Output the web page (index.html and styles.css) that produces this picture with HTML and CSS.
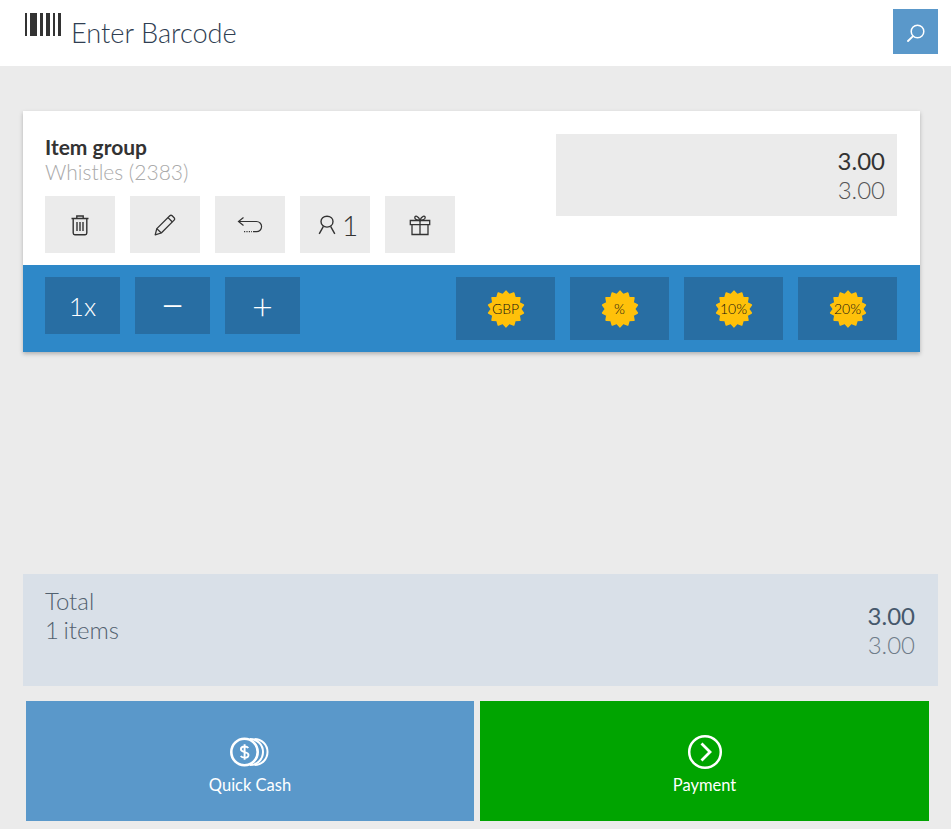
FILE: index.html
```html
<!DOCTYPE html>
<html lang="en">
<head>
<meta charset="utf-8">
<title>Enter Barcode</title>
<link rel="stylesheet" href="styles.css">
</head>
<body>
<svg class="defs" width="0" height="0" aria-hidden="true">
  <symbol id="burst" viewBox="-20 -20 40 40">
    <polygon points="0,-17.800 3.230,-14.140 7.720,-16.040 9.040,-11.340 13.920,-11.100 13.060,-6.290 17.350,-3.960 14.500,0 17.350,3.960 13.060,6.290 13.920,11.100 9.040,11.340 7.720,16.040 3.230,14.140 0,17.800 -3.230,14.140 -7.720,16.040 -9.040,11.340 -13.920,11.100 -13.060,6.290 -17.350,3.960 -14.500,0 -17.350,-3.960 -13.060,-6.290 -13.920,-11.100 -9.040,-11.340 -7.720,-16.040 -3.230,-14.140" fill="#ffc10a" stroke="#ffc10a" stroke-width="1.600" stroke-linejoin="round"/>
  </symbol>
</svg>
<div class="page">
  <header class="topbar">
    <div class="barcode-entry">
      <svg class="barcode" width="37" height="24" viewBox="0 0 37 24">
        <rect x="0" y="0" width="2" height="23" fill="#333"/>
        <rect x="5" y="0" width="7" height="23" fill="#333"/>
        <rect x="15" y="0" width="3" height="23" fill="#333"/>
        <rect x="21" y="0" width="4" height="23" fill="#333"/>
        <rect x="28" y="0" width="2" height="23" fill="#333"/>
        <rect x="33" y="0" width="3" height="23" fill="#333"/>
      </svg>
      <span class="barcode-label">Enter Barcode</span>
    </div>
    <button class="search-btn" aria-label="Search">
      <svg width="20" height="20" viewBox="0 0 20 20" fill="none" stroke="#fff" stroke-linecap="round">
        <circle cx="11.500" cy="9.500" r="6.300" stroke-width="1.500"/>
        <path d="M6.800 14.300 2 19" stroke-width="1.800"/>
      </svg>
    </button>
  </header>

  <main class="content">
    <section class="card">
      <div class="card-top">
        <div class="item-info">
          <div class="item-title">Item group</div>
          <div class="item-sub">Whistles (2383)</div>
          <div class="actions">
            <button class="action">
              <svg width="20" height="22" viewBox="0 0 20 22" fill="none" stroke="#333" stroke-width="1.400">
                <path d="M1.500 4.500h17M6.800 4.300V2h6.400v2.300M3.200 4.700v14.400c0 1 .6 1.600 1.600 1.600h10.400c1 0 1.600-.6 1.600-1.600V4.700"/>
                <path d="M7 8v9M10 8v9M13 8v9"/>
              </svg>
            </button>
            <button class="action">
              <svg width="22" height="22" viewBox="0 0 22 22" fill="none" stroke="#333" stroke-width="1.300" stroke-linejoin="round">
                <path d="M1.200 20.800 2.800 14.600 15.800 1.800c.7-.7 1.700-.7 2.400 0l1.900 1.900c.7.700.7 1.700 0 2.400L7.300 19Z"/>
                <path d="M2.800 14.600 7.300 19M14 3.600l4.400 4.400"/>
              </svg>
            </button>
            <button class="action">
              <svg width="26" height="18" viewBox="0 0 26 18" fill="none" stroke="#333" stroke-width="1.200">
                <path d="M6.500 1.500 1.500 5.500l5 4M1.800 5.500H19.500a4.800 4.800 0 0 1 0 10.200H16"/>
                <path d="M7 15.700h8" stroke-dasharray="1.200 1.200"/>
              </svg>
            </button>
            <button class="action action-guest">
              <svg width="18" height="20" viewBox="0 0 18 20" fill="none" stroke="#333" stroke-width="1.400">
                <path d="M9 1.300c3.600 0 6 2.300 6 5.300 0 3.200-2.600 5.500-6 5.500s-6-2.300-6-5.500c0-3 2.400-5.300 6-5.300Z"/>
                <path d="M5.400 11.300 1.200 18.900M12.600 11.300l4.200 7.600"/>
              </svg>
              <span class="guest-count">1</span>
            </button>
            <button class="action">
              <svg width="22" height="22" viewBox="0 0 22 22" fill="none" stroke="#333" stroke-width="1.300">
                <path d="M1.300 6.500h19.400v4.200H1.300ZM3 10.700v9.800h16v-9.800M11 6.500v14"/>
                <path d="M11 6.300C9 6.300 5.800 5.600 5.800 3.500c0-2.200 3.600-2 5.200 2.800 1.600-4.800 5.200-5 5.200-2.800 0 2.100-3.200 2.800-5.200 2.800Z"/>
              </svg>
            </button>
          </div>
        </div>
        <div class="price-box">
          <div class="price-main">3.00</div>
          <div class="price-sub">3.00</div>
        </div>
      </div>
      <div class="card-bar">
        <div class="qty-group">
          <button class="qty">1x</button>
          <button class="qty qty-minus">—</button>
          <button class="qty qty-plus">+</button>
        </div>
        <div class="discount-group">
          <button class="discount"><svg class="burst" viewBox="0 0 40 40"><use href="#burst" width="40" height="40"/></svg><span class="discount-label">GBP</span></button>
          <button class="discount"><svg class="burst" viewBox="0 0 40 40"><use href="#burst" width="40" height="40"/></svg><span class="discount-label">%</span></button>
          <button class="discount"><svg class="burst" viewBox="0 0 40 40"><use href="#burst" width="40" height="40"/></svg><span class="discount-label">10%</span></button>
          <button class="discount"><svg class="burst" viewBox="0 0 40 40"><use href="#burst" width="40" height="40"/></svg><span class="discount-label">20%</span></button>
        </div>
      </div>
    </section>

    <section class="totals">
      <div class="totals-left">
        <div>Total</div>
        <div class="totals-count">1 items</div>
      </div>
      <div class="totals-right">
        <div class="totals-main">3.00</div>
        <div class="totals-sub">3.00</div>
      </div>
    </section>

    <div class="pay-row">
      <button class="pay pay-cash">
        <svg width="40" height="30" viewBox="0 0 40 30" fill="none" stroke="#fff">
          <path d="M20 2a13 13 0 0 1 0 26" stroke-width="2"/>
          <path d="M24.500 2a13 13 0 0 1 0 26" stroke-width="2"/>
          <circle cx="14.500" cy="15" r="13.200" fill="#5a98ca" stroke-width="2.600"/>
          <path d="M18.300 11c-.7-1-2-1.500-3.700-1.500-2.200 0-3.700 1.100-3.700 2.700 0 3.800 7.600 1.900 7.600 5.700 0 1.700-1.600 2.700-3.900 2.700-1.700 0-3.100-.6-3.900-1.600M14.600 7.200v15.600" stroke-width="1.900"/>
        </svg>
        <span class="pay-label">Quick Cash</span>
      </button>
      <button class="pay pay-go">
        <svg class="pay-go-icon" width="36" height="36" viewBox="0 0 36 36" fill="none" stroke="#fff">
          <circle cx="18" cy="18" r="15.800" stroke-width="2.500"/>
          <path d="M14.500 9.500 23 18l-8.500 8.500" stroke-width="2.800"/>
        </svg>
        <span class="pay-label">Payment</span>
      </button>
    </div>
  </main>
</div>
</body>
</html>
```
FILE: styles.css
```css
* { box-sizing: border-box; }
html, body { margin: 0; padding: 0; height: 100%; }
body {
  background: #ebebeb;
  font-family: Lato, "Open Sans", sans-serif;
  font-weight: 300;
  color: #333;
  overflow: hidden;
}
button {
  border: 0;
  padding: 0;
  margin: 0;
  font: inherit;
  color: inherit;
  display: flex;
  align-items: center;
  justify-content: center;
}
.defs { position: absolute; }
.page { height: 829px; display: flex; flex-direction: column; }

.topbar {
  height: 66px;
  flex: none;
  background: #fff;
  display: flex;
  justify-content: space-between;
  padding: 9px 13px 0 25px;
}
.barcode-entry { display: flex; align-items: flex-start; }
.barcode { margin-top: 4px; }
.barcode-label {
  margin: 9px 0 0 9px;
  font-size: 27.200px;
  line-height: 30px;
  color: #2f3e52;
}
.search-btn { width: 45px; height: 45px; background: #5a98ca; }

.content {
  flex: 1;
  display: flex;
  flex-direction: column;
  padding: 45px 13px 8px 23px;
}

.card {
  width: 897px;
  box-shadow: 0 2px 4px rgba(0, 0, 0, .25);
}
.card-top {
  height: 154px;
  background: #fff;
  display: flex;
  justify-content: space-between;
  padding: 23px 23px 0 22px;
}
.item-title {
  font-size: 21px;
  line-height: 26px;
  font-weight: 700;
  color: #333;
}
.item-sub {
  font-size: 21px;
  line-height: 24px;
  color: #aaa;
}
.actions { display: flex; gap: 15px; margin-top: 12px; }
.action {
  width: 70px;
  height: 57px;
  background: #ebebeb;
}
.action-guest { gap: 6px; padding-left: 6px; }
.guest-count { font-size: 28px; line-height: 30px; color: #333; }
.price-box {
  width: 341px;
  height: 82px;
  background: #ebebeb;
  padding: 12px 12px 0;
  text-align: right;
}
.price-main { font-size: 24px; line-height: 29px; font-weight: 400; color: #333; }
.price-sub { font-size: 24px; line-height: 29px; color: #555; }

.card-bar {
  height: 87px;
  background: #2e88c8;
  display: flex;
  justify-content: space-between;
  padding: 12px 23px 0 22px;
}
.qty-group, .discount-group { display: flex; gap: 15px; align-items: flex-start; }
.qty {
  width: 75px;
  height: 57px;
  background: #286ea3;
  color: #fff;
  font-size: 26px;
}
.qty-minus { font-size: 26px; font-weight: 400; padding-bottom: 3px; }
.qty-plus { font-size: 36px; }
.discount {
  width: 99px;
  height: 63px;
  background: #286ea3;
  position: relative;
}
.burst { width: 40px; height: 40px; }
.discount-label {
  position: absolute;
  inset: 0;
  display: flex;
  align-items: center;
  justify-content: center;
  font-size: 14px;
  color: #111;
  font-weight: 300;
}

.totals {
  margin-top: auto;
  height: 112px;
  background: #d9e0e8;
  display: flex;
  justify-content: space-between;
  padding: 12px 23px 0 22px;
  font-size: 24px;
  line-height: 29px;
}
.totals-left { color: #52616f; }
.totals-count { word-spacing: -2px; }
.totals-right { text-align: right; padding-top: 15px; }
.totals-main { font-weight: 400; color: #46586c; }
.totals-sub { color: #6f7c89; }

.pay-row {
  display: flex;
  gap: 6px;
  margin: 15px 9px 0 3px;
}
.pay {
  height: 120px;
  flex-direction: column;
  color: #fff;
  gap: 7px;
  padding-top: 11px;
}
.pay-cash { width: 448px; background: #5a98ca; }
.pay-go { width: 449px; background: #00a400; }
.pay-go-icon { margin: -3px 0; }
.pay-label { font-size: 16.500px; line-height: 22px; font-weight: 400; }
```
